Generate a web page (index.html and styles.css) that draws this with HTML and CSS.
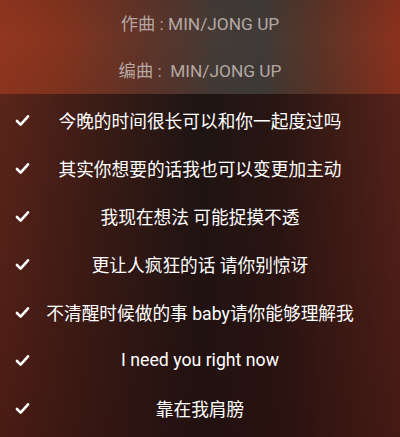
FILE: index.html
```html
<!DOCTYPE html>
<html lang="zh">
<head>
<meta charset="utf-8">
<link rel="stylesheet" href="styles.css">
</head>
<body>
<div class="screen">
  <div class="credits">
    <div class="credit">作曲 : MIN/JONG UP</div>
    <div class="credit">编曲 :&nbsp; MIN/JONG UP</div>
  </div>
  <div class="lyrics">
    <div class="row"><svg class="check" viewBox="0 0 16 14"><polyline points="2,7.5 6,11.5 14,2.5"/></svg><span class="line">今晚的时间很长可以和你一起度过吗</span></div>
    <div class="row"><svg class="check" viewBox="0 0 16 14"><polyline points="2,7.5 6,11.5 14,2.5"/></svg><span class="line">其实你想要的话我也可以变更加主动</span></div>
    <div class="row"><svg class="check" viewBox="0 0 16 14"><polyline points="2,7.5 6,11.5 14,2.5"/></svg><span class="line">我现在想法 可能捉摸不透</span></div>
    <div class="row"><svg class="check" viewBox="0 0 16 14"><polyline points="2,7.5 6,11.5 14,2.5"/></svg><span class="line">更让人疯狂的话 请你别惊讶</span></div>
    <div class="row"><svg class="check" viewBox="0 0 16 14"><polyline points="2,7.5 6,11.5 14,2.5"/></svg><span class="line">不清醒时候做的事 baby请你能够理解我</span></div>
    <div class="row"><svg class="check" viewBox="0 0 16 14"><polyline points="2,7.5 6,11.5 14,2.5"/></svg><span class="line">I need you right now</span></div>
    <div class="row"><svg class="check" viewBox="0 0 16 14"><polyline points="2,7.5 6,11.5 14,2.5"/></svg><span class="line">靠在我肩膀</span></div>
  </div>
</div>
</body>
</html>
```
FILE: styles.css
```css
html, body {
  margin: 0;
  padding: 0;
}
body {
  width: 400px;
  height: 437px;
  overflow: hidden;
  font-family: Roboto, "Noto Sans CJK SC", sans-serif;
  background: #2a1412;
}
.screen {
  width: 400px;
  height: 437px;
  display: flex;
  flex-direction: column;
}
.credits {
  height: 94px;
  flex: none;
  display: flex;
  flex-direction: column;
  background:
    linear-gradient(180deg, rgba(0,0,0,0.05) 0%, rgba(0,0,0,0) 40%, rgba(0,0,0,0.05) 100%),
    linear-gradient(90deg, #92361f 0%, #84341e 15%, #613428 35%, #433b37 55%, #3f3b38 65%, #5c3426 80%, #8c311e 100%);
}
.credit {
  height: 48px;
  display: flex;
  align-items: center;
  justify-content: center;
  color: #b5a8a4;
  font-size: 17.3px;
  margin-top: -1px;
}
.credit:first-child {
  margin-top: -2px;
}
.lyrics {
  flex: 1;
  min-height: 0;
  overflow: hidden;
  padding-top: 2px;
  display: flex;
  flex-direction: column;
  background:
    linear-gradient(180deg, rgba(20,10,10,0) 0%, rgba(40,10,10,0.35) 100%),
    linear-gradient(90deg, #5b2519 0%, #3a1c16 25%, #1e1513 50%, #2a1613 70%, #55221a 100%);
}
.row {
  height: 48px;
  flex: none;
  display: grid;
  grid-template-columns: 44px 1fr 44px;
  align-items: center;
}
.check {
  width: 15px;
  height: 13px;
  margin-left: 15px;
}
.check polyline {
  fill: none;
  stroke: #ffffff;
  stroke-width: 2.8;
  stroke-linecap: round;
  stroke-linejoin: round;
}
.line {
  grid-column: 2;
  text-align: center;
  white-space: nowrap;
  color: #ffffff;
  font-size: 17.7px;
}
```
